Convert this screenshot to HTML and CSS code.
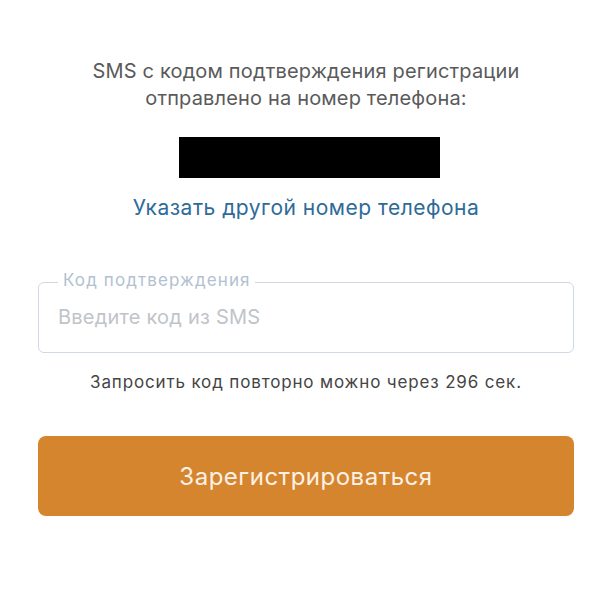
FILE: index.html
```html
<!DOCTYPE html>
<html lang="ru">
<head>
<meta charset="utf-8">
<title>Подтверждение регистрации</title>
<link rel="stylesheet" href="styles.css">
</head>
<body>
<main class="page">
  <p class="title">SMS с кодом подтверждения регистрации<br>отправлено на номер телефона:</p>
  <div class="phone"></div>
  <a class="change-link" href="#">Указать другой номер телефона</a>
  <fieldset class="field">
    <legend class="field-label">Код подтверждения</legend>
    <input class="field-input" type="text" placeholder="Введите код из SMS">
  </fieldset>
  <p class="hint">Запросить код повторно можно через 296 сек.</p>
  <button class="submit" type="button">Зарегистрироваться</button>
</main>
</body>
</html>
```

FILE: styles.css
```css
html, body {
  margin: 0;
  padding: 0;
  background: #ffffff;
}

body {
  font-family: Inter, Roboto, "Liberation Sans", Arial, sans-serif;
}

.page {
  display: flex;
  flex-direction: column;
  padding: 58px 27px 0 38px;
}

.title {
  margin: 0;
  font-size: 20px;
  line-height: 27px;
  letter-spacing: 0.16px;
  color: #5a5a5a;
  text-align: center;
}

.phone {
  width: 261px;
  height: 41px;
  background: #000000;
  margin: 25px 0 0 141px;
}

.change-link {
  margin-top: 18px;
  font-size: 21px;
  line-height: 24px;
  letter-spacing: 0.5px;
  color: #2e6b98;
  text-decoration: none;
  text-align: center;
}

.field {
  margin: 51px 0 0 0;
  padding: 0 0 12px 19px;
  border: 1px solid #cfd8e3;
  border-radius: 6px;
}

.field-label {
  padding: 0 4px 4px 5px;
  font-size: 17px;
  line-height: 18px;
  letter-spacing: 1.1px;
  color: #b3c1d0;
}

.field-input {
  display: block;
  width: 100%;
  height: 47px;
  padding: 0;
  border: none;
  outline: none;
  background: transparent;
  font-family: inherit;
  font-size: 20px;
  letter-spacing: 0.22px;
  color: #333333;
}

.field-input::placeholder {
  color: #c0c4c9;
}

.hint {
  margin: 19px 0 0 0;
  font-size: 17px;
  line-height: 20px;
  letter-spacing: 0.85px;
  color: #454545;
  text-align: center;
}

.submit {
  margin-top: 44px;
  height: 80px;
  border: none;
  border-radius: 8px;
  background: #d6852f;
  color: #fcf1e4;
  font-family: inherit;
  font-size: 24px;
  letter-spacing: 0.5px;
}
```
